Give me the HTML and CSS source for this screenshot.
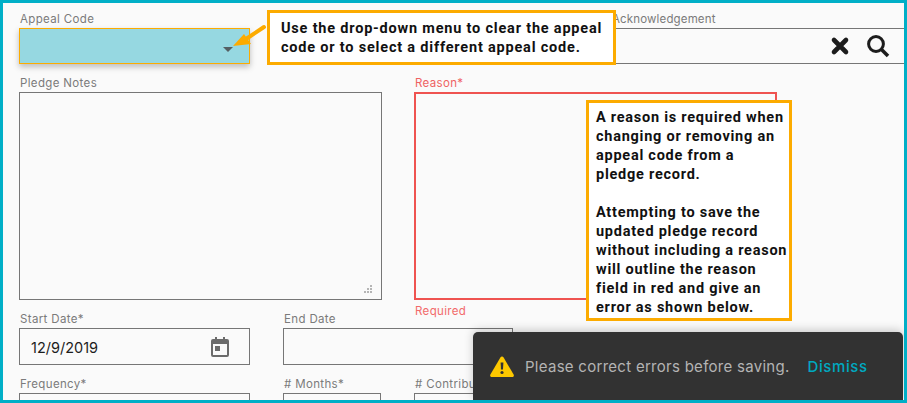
FILE: index.html
```html
<!DOCTYPE html>
<html lang="en">
<head>
  <meta charset="UTF-8">
  <title>Pledge record</title>
  <link rel="stylesheet" href="styles.css">
</head>
<body>
  <div class="frame">
    <div class="form">
      <div class="row row-top">
        <div class="field appeal">
          <label>Appeal Code</label>
          <div class="box box-select"><span class="caret"></span></div>
        </div>
        <div class="field ack">
          <label>Acknowledgement</label>
          <div class="box box-line">
            <svg class="icon-x" width="20" height="20" viewBox="0 0 20 20"><path d="M4 4L16 16M16 4L4 16" stroke="#1c1c1c" stroke-width="4.6" stroke-linecap="round" fill="none"/></svg>
            <svg class="icon-search" width="24" height="24" viewBox="0 0 24 24"><circle cx="10" cy="10" r="7.4" stroke="#1c1c1c" stroke-width="3" fill="none"/><path d="M15.5 15.5L22 22" stroke="#1c1c1c" stroke-width="3.6" fill="none"/></svg>
          </div>
        </div>
      </div>

      <div class="row row-notes">
        <div class="field notes">
          <label>Pledge Notes</label>
          <div class="box box-area">
            <svg class="grip" width="9" height="9" viewBox="0 0 9 9"><path d="M7 0h2v2H7zM4 3h2v2H4zM7 3h2v2H7zM1 6h2v2H1zM4 6h2v2H4zM7 6h2v2H7z" fill="#b5b5b5"/></svg>
          </div>
        </div>
        <div class="field reason">
          <label class="error">Reason*</label>
          <div class="box box-area box-error"></div>
          <div class="error-text">Required</div>
        </div>
      </div>

      <div class="row row-dates">
        <div class="field date">
          <label>Start Date*</label>
          <div class="box box-date">
            <span class="value">12/9/2019</span>
            <svg class="icon-cal" width="18" height="20" viewBox="0 0 18 20"><path d="M4 0h2v2h6V0h2v2h2a2 2 0 0 1 2 2v14a2 2 0 0 1-2 2H2a2 2 0 0 1-2-2V4a2 2 0 0 1 2-2h2zM2 7v11h14V7z" fill="#6b6b6b"/><path d="M4 9h5v5H4z" fill="#6b6b6b"/></svg>
          </div>
        </div>
        <div class="field date date-end">
          <label>End Date</label>
          <div class="box box-date"></div>
        </div>
      </div>

      <div class="row row-bottom">
        <div class="field date">
          <label>Frequency*</label>
          <div class="box box-date"></div>
        </div>
        <div class="field months">
          <label># Months*</label>
          <div class="box box-date"></div>
        </div>
        <div class="field contrib">
          <label># Contributions*</label>
          <div class="box box-date"></div>
        </div>
      </div>
    </div>

    <div class="callout callout-top">Use the drop-down menu to clear the appeal<br>code or to select a different appeal code.</div>
    <svg class="arrow" width="40" height="28" viewBox="0 0 40 28"><path d="M35 4L17 16" stroke="#fcab00" stroke-width="4" stroke-linecap="round" fill="none"/><path d="M4 23L15 11L22 21z" fill="#fcab00"/></svg>

    <div class="callout callout-side">
      <p>A reason is required when<br>changing or removing an<br>appeal code from a<br>pledge record.</p>
      <p>Attempting to save the<br>updated pledge record<br>without including a reason<br>will outline the reason<br>field in red and give an<br>error as shown below.</p>
    </div>

    <div class="toast">
      <svg class="icon-warn" width="24" height="21" viewBox="0 0 24 21"><path d="M12 0.5c.7 0 1.2.4 1.6 1l10 17c.7 1.2-.1 2.5-1.5 2.5H1.900C.5 21-.3 19.700.4 18.500l10-17c.4-.6.9-1 1.600-1z" fill="#fdc800"/><path d="M10.600 6.500h2.800l-.4 7h-2z" fill="#323232"/><circle cx="12" cy="16.500" r="1.600" fill="#323232"/></svg>
      <span class="toast-msg">Please correct errors before saving.</span>
      <a class="toast-btn" href="#">Dismiss</a>
    </div>
  </div>
</body>
</html>
```

FILE: styles.css
```css
html, body {
  margin: 0;
  padding: 0;
}
body {
  font-family: Inter, 'Open Sans', sans-serif;
  color: #1d1d1d;
}
.frame {
  position: relative;
  box-sizing: border-box;
  width: 907px;
  height: 403px;
  border: 3px solid #00afc7;
  background: #fafafa;
  overflow: hidden;
}
.form {
  display: flex;
  flex-direction: column;
  padding: 9px 0 0 16px;
}
.row {
  display: flex;
}
.field label {
  display: block;
  height: 16px;
  padding-left: 1px;
  font-size: 11.5px;
  line-height: 15px;
  letter-spacing: 0.35px;
  color: #7b7b7b;
  white-space: nowrap;
}
.box {
  box-sizing: border-box;
  border: 1px solid #767676;
}
.row-top {
  height: 64px;
}
.appeal {
  width: 231px;
}
.box-select {
  position: relative;
  height: 36px;
  border: 1px solid #fcab00;
  background: #96d8e1;
  box-shadow: 0 3px 6px rgba(0, 0, 0, 0.25);
}
.caret {
  position: absolute;
  right: 16px;
  bottom: 11px;
  border-left: 5px solid transparent;
  border-right: 5px solid transparent;
  border-top: 5px solid #555f63;
}
.ack {
  margin-left: 361px;
  flex: 1;
}
.ack label {
  letter-spacing: 0.15px;
}
.box-line {
  display: flex;
  align-items: center;
  justify-content: flex-end;
  gap: 16px;
  height: 36px;
  padding-right: 14px;
  border-width: 1px 0;
}
.row-notes {
  gap: 32px;
  height: 236px;
}
.notes, .reason {
  width: 363px;
}
.box-area {
  position: relative;
  height: 208px;
}
.grip {
  position: absolute;
  right: 9px;
  bottom: 5px;
}
.box-error {
  border: 2px solid #ef5350;
}
.field label.error {
  color: #ef6262;
}
.error-text {
  margin-top: 4px;
  padding-left: 1px;
  font-size: 11.5px;
  line-height: 15px;
  letter-spacing: 0.35px;
  color: #f26a6a;
}
.row-dates, .row-bottom {
  gap: 33px;
}
.row-dates {
  height: 65px;
}
.date {
  width: 231px;
}
.date-end {
  width: 230px;
}
.box-date {
  display: flex;
  align-items: center;
  justify-content: space-between;
  height: 37px;
  padding: 0 20px 0 11px;
}
.value {
  padding-top: 2px;
  font-size: 14.5px;
}
.months {
  width: 98px;
}
.contrib {
  width: 231px;
}
.callout {
  position: absolute;
  box-sizing: border-box;
  border: 3px solid #fcab00;
  background: #fff;
  font-family: Roboto, 'Liberation Sans', sans-serif;
  font-weight: 700;
  font-size: 14.5px;
  line-height: 19px;
  letter-spacing: 0.8px;
  color: #111;
  white-space: nowrap;
}
.callout-top {
  left: 264px;
  top: 7px;
  width: 349px;
  height: 55px;
  padding: 6px 0 0 11px;
}
.callout-side {
  left: 583px;
  top: 97px;
  width: 206px;
  height: 221px;
  padding: 5px 0 0 7px;
  letter-spacing: 0.75px;
}
.callout-side p {
  margin: 0 0 19px;
}
.arrow {
  position: absolute;
  left: 226px;
  top: 20px;
}
.toast {
  position: absolute;
  right: 1px;
  bottom: 0;
  display: flex;
  align-items: center;
  box-sizing: border-box;
  width: 430px;
  height: 68px;
  padding: 0 0 0 17px;
  border-radius: 5px 5px 0 0;
  background: #323232;
  box-shadow: 0 -2px 10px rgba(0, 0, 0, 0.2);
}
.toast-msg {
  margin-left: 11px;
  font-size: 15px;
  letter-spacing: 0.28px;
  color: #b4b4b4;
}
.toast-btn {
  margin-left: 18px;
  font-size: 15px;
  font-weight: 500;
  letter-spacing: 0.6px;
  color: #00a9c0;
  text-decoration: none;
}
```
